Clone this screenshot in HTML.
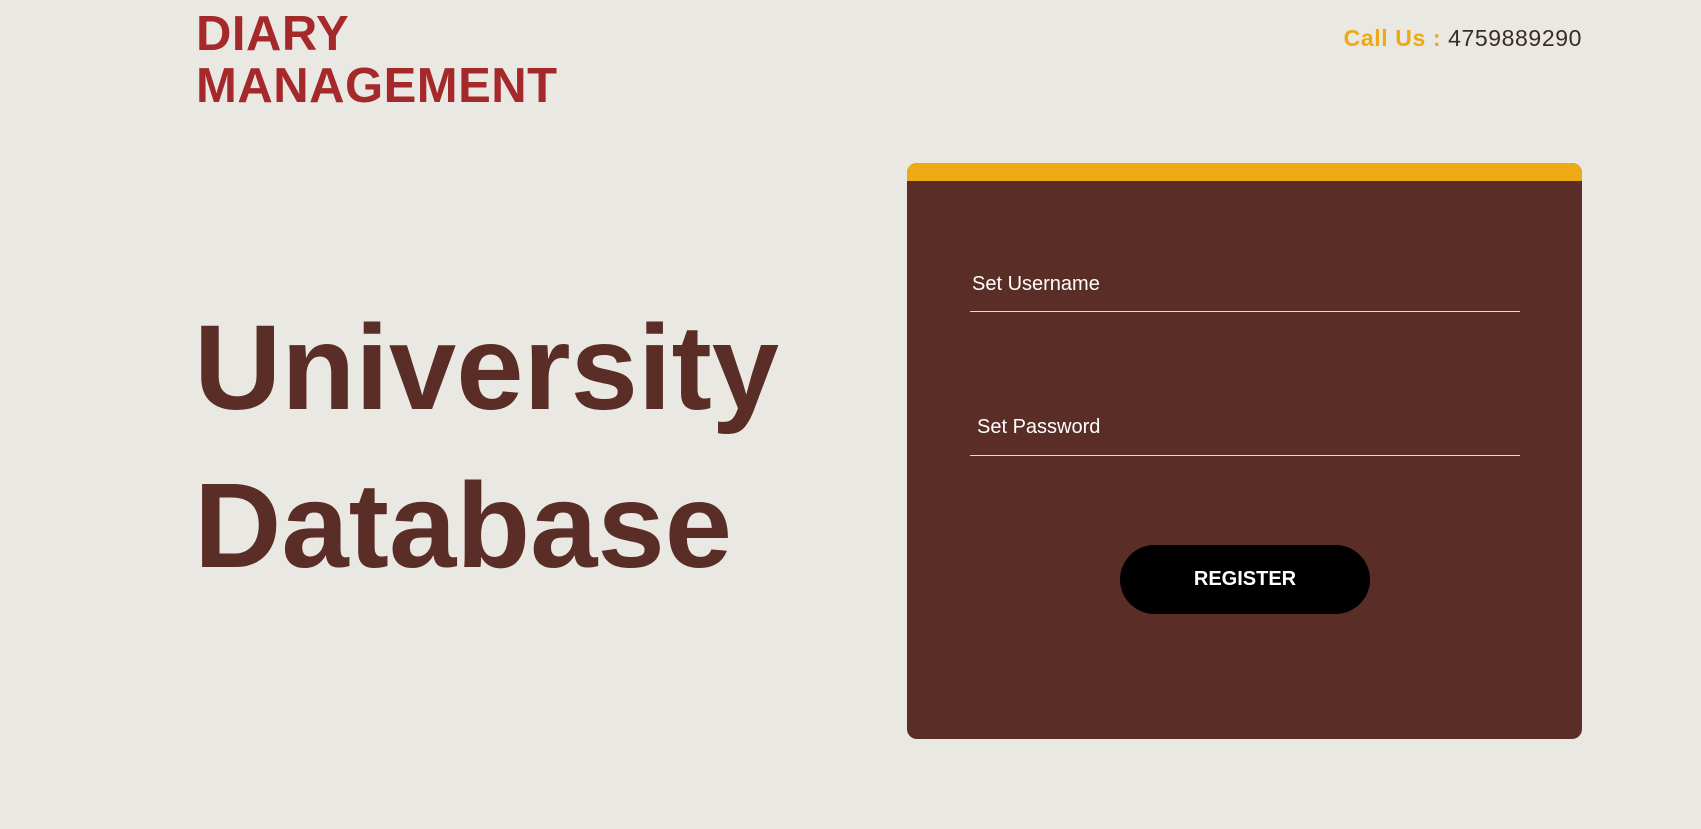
<!DOCTYPE html>
<html><head><meta charset="utf-8"><style>
html,body{margin:0;padding:0;}
body{width:1701px;height:829px;background:#EAE8E3;position:relative;overflow:hidden;font-family:"Liberation Sans",sans-serif;}
.logo{position:absolute;left:196px;top:8px;color:#A5292A;font-weight:bold;font-size:49px;line-height:52px;letter-spacing:0.5px;}
.call{position:absolute;right:119px;top:25px;font-size:23px;color:#3a2a28;letter-spacing:0.6px;}
.call b{color:#EEA914;}
.big{position:absolute;left:194px;color:#5A2D27;font-weight:bold;font-size:121px;line-height:1;}
.card{position:absolute;left:907px;top:163px;width:675px;height:576px;background:#5A2D27;border-radius:10px;overflow:hidden;}
.bar{height:18px;background:#EEA914;}
.lbl{position:absolute;color:#fff;font-size:20px;}
.line{position:absolute;left:63px;width:550px;height:1px;background:#e8d8d4;}
.btn{position:absolute;left:213px;top:382px;width:250px;height:69px;border-radius:35px;background:#000;color:#fff;font-size:20px;font-weight:bold;text-align:center;line-height:69px;}
</style></head><body>
<div class="logo">DIARY<br>MANAGEMENT</div>
<div class="call"><b>Call Us :</b> 4759889290</div>
<div class="big" style="top:307px">University</div>
<div class="big" style="top:465px">Database</div>
<div class="card"><div class="bar"></div>
<div class="lbl" style="left:65px;top:110px">Set Username</div>
<div class="line" style="top:148px"></div>
<div class="lbl" style="left:70px;top:253px">Set Password</div>
<div class="line" style="top:292px"></div>
<div class="btn">REGISTER</div>
</div>
</body></html>
